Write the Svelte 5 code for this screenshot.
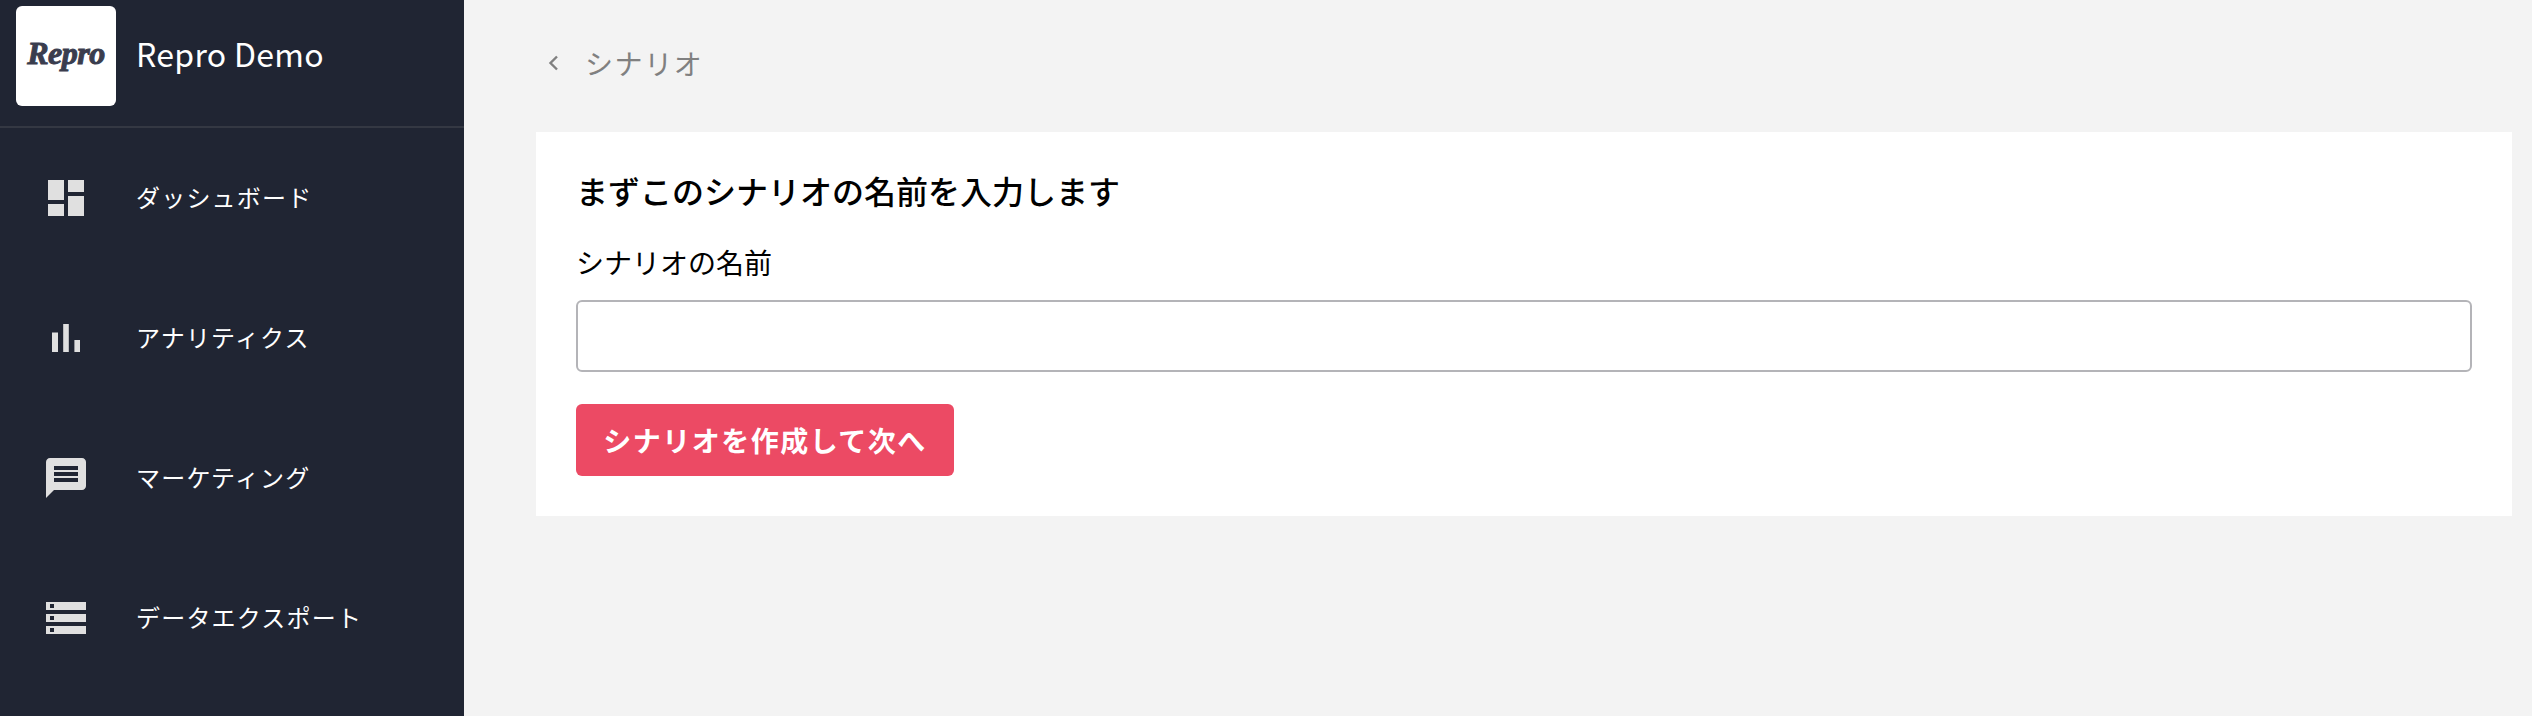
<script>
  const navItems = [
    { label: 'ダッシュボード', d: 'M3 13h8V3H3v10zm0 8h8v-6H3v6zm10 0h8V11h-8v10zm0-18v6h8V3h-8z' },
    { label: 'アナリティクス', d: 'M5 9.2h3V19H5zM10.6 5h2.8v14h-2.8zm5.6 8H19v6h-2.8z' },
    { label: 'マーケティング', d: 'M20 2H4c-1.1 0-1.99.9-1.99 2L2 22l4-4h14c1.1 0 2-.9 2-2V4c0-1.1-.9-2-2-2zm-2 12H6v-2h12v2zm0-3H6V9h12v2zm0-3H6V6h12v2z' },
    { label: 'データエクスポート', d: 'M2 20h20v-4H2v4zm2-3h2v2H4v-2zM2 4v4h20V4H2zm4 3H4V5h2v2zm-4 7h20v-4H2v4zm2-3h2v2H4v-2z' }
  ];
</script>

<div class="layout">
  <aside class="sidebar">
    <div class="brand">
      <div class="logo"><span>Repro</span></div>
      <span class="brand-name">Repro Demo</span>
    </div>
    <nav class="nav">
      {#each navItems as item}
        <div class="nav-item">
          <svg class="nav-icon" viewBox="0 0 24 24" width="48" height="48"><path d={item.d} /></svg>
          <span class="nav-label">{item.label}</span>
        </div>
      {/each}
    </nav>
  </aside>

  <main class="main">
    <div class="crumb">
      <svg class="chevron" viewBox="0 0 12 16" width="12" height="16"><polyline points="10,1.5 3.5,8 10,14.5" /></svg>
      <span class="crumb-label">シナリオ</span>
    </div>
    <section class="card">
      <h1 class="title">まずこのシナリオの名前を入力します</h1>
      <label class="label" for="scenario-name">シナリオの名前</label>
      <input class="input" id="scenario-name" type="text" />
      <button class="submit">シナリオを作成して次へ</button>
    </section>
  </main>
</div>

<style>
  :global(body) {
    margin: 0;
    background: #f3f3f3;
  }
  .layout {
    display: flex;
    height: 716px;
    overflow: hidden;
    font-family: "Noto Sans CJK JP", "Noto Sans", sans-serif;
  }
  .sidebar {
    width: 464px;
    flex-shrink: 0;
    background: #202533;
  }
  .brand {
    display: flex;
    align-items: center;
    gap: 20px;
    height: 128px;
    padding: 0 16px 14px;
    box-sizing: border-box;
    border-bottom: 2px solid #343843;
  }
  .logo {
    display: flex;
    align-items: center;
    justify-content: center;
    width: 100px;
    height: 100px;
    border-radius: 6px;
    background: #fff;
  }
  .logo span {
    margin-top: -6px;
    font-family: "Liberation Serif", serif;
    font-size: 32px;
    font-weight: 700;
    font-style: italic;
    color: #3a3d4e;
    letter-spacing: -0.5px;
    -webkit-text-stroke: 1px #3a3d4e;
  }
  .brand-name {
    font-size: 32px;
    color: #fff;
    line-height: 1;
    margin-top: -6px;
    letter-spacing: 0.3px;
  }
  .nav-item {
    display: flex;
    align-items: center;
    gap: 46px;
    height: 140px;
    padding-left: 42px;
  }
  .nav-icon {
    flex-shrink: 0;
    fill: #e0e0e0;
  }
  .nav-label {
    margin-top: -3px;
    font-size: 24px;
    color: #fff;
    letter-spacing: 1.2px;
  }
  .main {
    flex: 1;
    padding: 0 20px 0 72px;
  }
  .crumb {
    display: flex;
    align-items: center;
    gap: 26px;
    height: 132px;
    padding: 0 0 6px 11px;
    box-sizing: border-box;
  }
  .chevron {
    fill: none;
    stroke: #808080;
    stroke-width: 2.4;
  }
  .crumb-label {
    font-size: 28px;
    color: #808080;
    letter-spacing: 1.6px;
  }
  .card {
    display: flex;
    flex-direction: column;
    align-items: flex-start;
    height: 384px;
    padding: 38px 40px 40px;
    box-sizing: border-box;
    background: #fff;
  }
  .title {
    margin: 0;
    font-size: 32px;
    font-weight: 500;
    line-height: 40px;
    color: #000;
  }
  .label {
    margin-top: 32px;
    font-size: 28px;
    line-height: 40px;
    color: #000;
  }
  .input {
    width: 100%;
    height: 72px;
    margin-top: 18px;
    box-sizing: border-box;
    border: 2px solid #b4b4b8;
    border-radius: 6px;
    background: #fff;
  }
  .submit {
    height: 72px;
    width: 378px;
    margin-top: 32px;
    padding: 0;
    border: none;
    border-radius: 6px;
    background: #ec4a64;
    color: #fff;
    font-family: inherit;
    font-size: 28px;
    font-weight: 700;
    letter-spacing: 1.5px;
  }
</style>
